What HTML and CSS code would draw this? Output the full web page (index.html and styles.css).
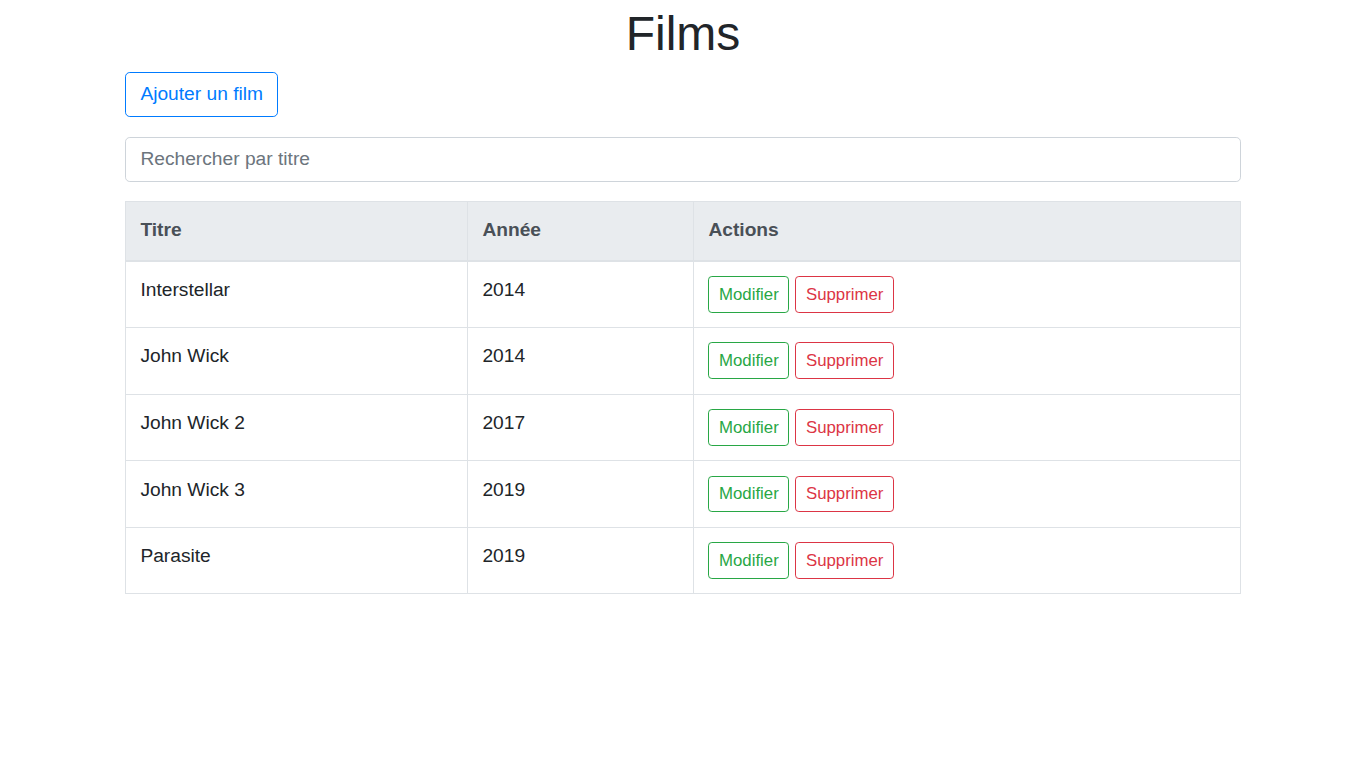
FILE: index.html
```html
<!DOCTYPE html>
<html lang="fr">
<head>
<meta charset="utf-8">
<title>Films</title>
<link rel="stylesheet" href="styles.css">
</head>
<body>
<div class="container">
  <h1 class="title">Films</h1>
  <button class="btn btn-outline-primary add-btn">Ajouter un film</button>
  <input class="search" type="text" placeholder="Rechercher par titre">
  <table class="films">
    <thead>
      <tr>
        <th class="col-title">Titre</th>
        <th class="col-year">Année</th>
        <th class="col-actions">Actions</th>
      </tr>
    </thead>
    <tbody>
      <tr>
        <td>Interstellar</td>
        <td>2014</td>
        <td><div class="actions"><button class="btn btn-sm btn-outline-success">Modifier</button><button class="btn btn-sm btn-outline-danger">Supprimer</button></div></td>
      </tr>
      <tr>
        <td>John Wick</td>
        <td>2014</td>
        <td><div class="actions"><button class="btn btn-sm btn-outline-success">Modifier</button><button class="btn btn-sm btn-outline-danger">Supprimer</button></div></td>
      </tr>
      <tr>
        <td>John Wick 2</td>
        <td>2017</td>
        <td><div class="actions"><button class="btn btn-sm btn-outline-success">Modifier</button><button class="btn btn-sm btn-outline-danger">Supprimer</button></div></td>
      </tr>
      <tr>
        <td>John Wick 3</td>
        <td>2019</td>
        <td><div class="actions"><button class="btn btn-sm btn-outline-success">Modifier</button><button class="btn btn-sm btn-outline-danger">Supprimer</button></div></td>
      </tr>
      <tr>
        <td>Parasite</td>
        <td>2019</td>
        <td><div class="actions"><button class="btn btn-sm btn-outline-success">Modifier</button><button class="btn btn-sm btn-outline-danger">Supprimer</button></div></td>
      </tr>
    </tbody>
  </table>
</div>
</body>
</html>
```

FILE: styles.css
```css
html {
  font-size: 19.2px;
}
* {
  box-sizing: border-box;
}
body {
  margin: 0;
  font-family: "Liberation Sans", Arial, Helvetica, sans-serif;
  font-size: 1rem;
  line-height: 1.5;
  color: #212529;
  background: #fff;
}
.container {
  width: 1116px;
  margin: 0 auto;
  display: flex;
  flex-direction: column;
  align-items: flex-start;
}
.title {
  align-self: stretch;
  text-align: center;
  font-size: 2.5rem;
  font-weight: 500;
  line-height: 1.2;
  margin: 5px 0 0.5rem;
}
.btn {
  display: inline-block;
  font-family: inherit;
  font-size: 1rem;
  line-height: 1.5;
  padding: 0.375rem 0.75rem;
  border: 1px solid transparent;
  border-radius: 0.25rem;
  background: transparent;
  cursor: pointer;
}
.btn-sm {
  font-size: 0.875rem;
  padding: 0.25rem 0.5rem;
  border-radius: 0.2rem;
}
.btn-outline-primary {
  color: #007bff;
  border-color: #007bff;
}
.btn-outline-success {
  color: #28a745;
  border-color: #28a745;
}
.btn-outline-danger {
  color: #dc3545;
  border-color: #dc3545;
}
.add-btn {
  margin-bottom: 1rem;
}
.search {
  display: block;
  width: 100%;
  height: calc(1.5em + 0.75rem + 2px);
  padding: 0.375rem 0.75rem;
  font-family: inherit;
  font-size: 1rem;
  line-height: 1.5;
  color: #495057;
  border: 1px solid #ced4da;
  border-radius: 0.25rem;
  margin-bottom: 1rem;
  outline: none;
}
.search::placeholder {
  color: #6c757d;
  opacity: 1;
}
.films {
  width: 100%;
  border-collapse: collapse;
  border: 1px solid #dee2e6;
}
.films th,
.films td {
  padding: 0.75rem;
  vertical-align: top;
  text-align: left;
  border: 1px solid #dee2e6;
}
.films thead th {
  background: #e9ecef;
  color: #495057;
  font-weight: 700;
  border-bottom-width: 2px;
}
.col-title {
  width: 342px;
}
.col-year {
  width: 226px;
}
.actions {
  display: flex;
  gap: 6px;
}
```
